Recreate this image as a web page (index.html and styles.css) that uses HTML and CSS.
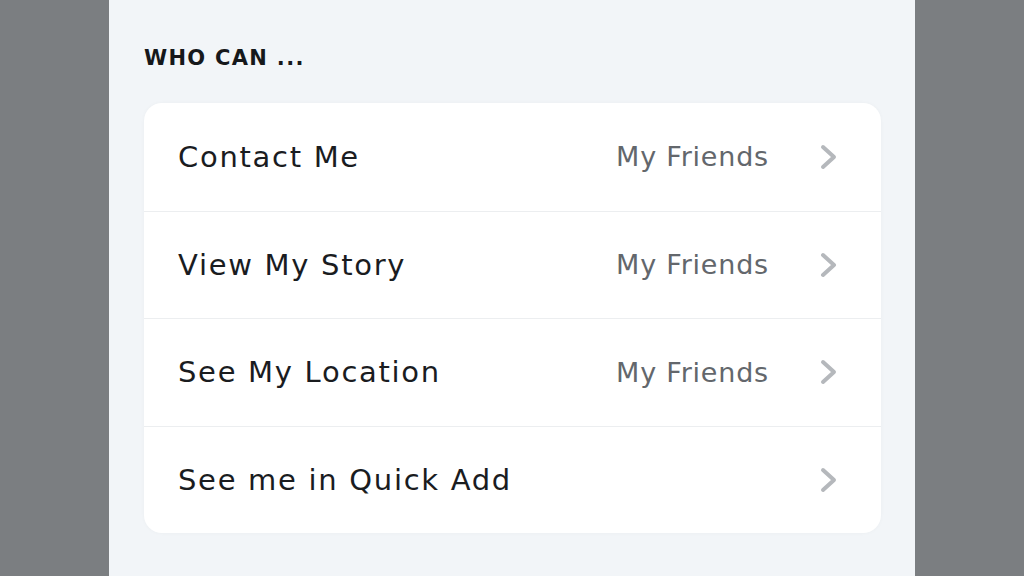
FILE: index.html
```html
<!DOCTYPE html>
<html lang="en">
<head>
    <meta charset="UTF-8">
    <title>Privacy</title>
    <link rel="stylesheet" href="styles.css">
</head>
<body>
<div class="page">
    <div class="panel">
        <div class="heading">WHO CAN ...</div>
        <div class="card">
            <div class="row">
                <span class="label">Contact Me</span>
                <span class="value">My Friends</span>
                <svg class="chevron" viewBox="0 0 20 28"><path d="M4 4 L15 14 L4 24"/></svg>
            </div>
            <div class="row">
                <span class="label">View My Story</span>
                <span class="value">My Friends</span>
                <svg class="chevron" viewBox="0 0 20 28"><path d="M4 4 L15 14 L4 24"/></svg>
            </div>
            <div class="row">
                <span class="label">See My Location</span>
                <span class="value">My Friends</span>
                <svg class="chevron" viewBox="0 0 20 28"><path d="M4 4 L15 14 L4 24"/></svg>
            </div>
            <div class="row">
                <span class="label">See me in Quick Add</span>
                <svg class="chevron" viewBox="0 0 20 28"><path d="M4 4 L15 14 L4 24"/></svg>
            </div>
        </div>
    </div>
</div>
</body>
</html>
```
FILE: styles.css
```css
html{
    height: 100%;
}
body{
    height: 100%;
    margin: 0;
    padding: 0;
    background-color: #7b7e81;
    font-family: "DejaVu Sans", "Noto Sans", sans-serif;
}
.page{
    display: flex;
    justify-content: flex-start;
    height: 576px;
    overflow: hidden;
}
.panel{
    margin-left: 109px;
    width: 806px;
    height: 100%;
    background-color: #f2f5f8;
    box-sizing: border-box;
    padding: 41px 34px 0 35px;
}
.heading{
    font-size: 21px;
    font-weight: bold;
    color: #16181b;
    letter-spacing: 1.3px;
    line-height: 34px;
    margin-bottom: 28px;
}
.card{
    background-color: #ffffff;
    border-radius: 18px;
    box-shadow: 0 0 4px rgba(0, 0, 0, 0.03);
    overflow: hidden;
}
.row{
    display: flex;
    align-items: center;
    box-sizing: border-box;
    height: 107.5px;
    padding: 0 42px 0 34px;
    border-top: 1px solid #eceef0;
}
.row:first-child{
    border-top: none;
}
.label{
    flex: 1;
    font-size: 29px;
    letter-spacing: 1.7px;
    color: #1a1c1f;
}
.value{
    font-size: 27px;
    letter-spacing: 0.8px;
    color: #63676c;
    margin-right: 50px;
}
.chevron{
    width: 20px;
    height: 28px;
    fill: none;
    stroke: #b5b8bc;
    stroke-width: 4;
    stroke-linecap: round;
    stroke-linejoin: round;
}
```
